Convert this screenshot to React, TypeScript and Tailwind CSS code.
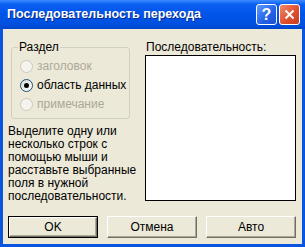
import React from "react";

const font = { fontFamily: '"Liberation Sans", Arial, sans-serif' };

const Radio: React.FC<{ label: string; checked?: boolean; disabled?: boolean }> = ({
  label,
  checked,
  disabled,
}) => (
  <div className="flex h-[19px] items-center gap-[4px] whitespace-nowrap pl-[8px]">
    <span
      className={`flex h-[13px] w-[13px] shrink-0 items-center justify-center rounded-full border ${
        disabled ? "border-[#CAC8BB] bg-[#F4F3EE]" : "border-[#1C5180] bg-[linear-gradient(135deg,#DCDBD3,#FFFFFF)]"
      }`}
    >
      {checked && <span className="h-[5px] w-[5px] rounded-full bg-black" />}
    </span>
    <span className={disabled ? "text-[#ACA899]" : "text-black"}>{label}</span>
  </div>
);

const Button: React.FC<{ label: string; isDefault?: boolean }> = ({ label, isDefault }) => (
  <div className={`h-[22px] w-[90px] ${isDefault ? "border border-black" : ""}`}>
    <div className="flex h-full w-full items-center justify-center border-t border-l border-white border-r border-b border-r-[#716F64] border-b-[#716F64] bg-[#ECE9D8] shadow-[inset_-1px_-1px_0_#ACA899]">
      {label}
    </div>
  </div>
);

const TitleButton: React.FC<{ kind: "help" | "close" }> = ({ kind }) => (
  <div
    className={`flex h-[21px] w-[21px] items-center justify-center rounded-[3px] border border-white ${
      kind === "help"
        ? "bg-[linear-gradient(135deg,#5C9BFF,#2260E8_60%,#1A4FD0)]"
        : "bg-[linear-gradient(135deg,#F08A6A,#E0502F_55%,#C63C1E)]"
    }`}
  >
    {kind === "help" ? (
      <span className="text-[16px] font-bold leading-none text-white">?</span>
    ) : (
      <svg width="11" height="11" viewBox="0 0 11 11">
        <path d="M1.5 1.5 L9.5 9.5 M9.5 1.5 L1.5 9.5" stroke="white" strokeWidth="2" />
      </svg>
    )}
  </div>
);

export default function App() {
  return (
    <div className="flex h-[247px] w-[305px] flex-col bg-[#0A55E0] text-[12px]" style={font}>
      {/* Title bar */}
      <div className="flex h-[29px] items-center bg-[linear-gradient(180deg,#3D8BFF_0%,#0A5FF2_15%,#0055E8_50%,#0050DF_85%,#0045C8_100%)] pl-[7px] pr-[5px]">
        <span className="flex-1 whitespace-nowrap text-[12.5px] font-bold text-white [text-shadow:1px_1px_0_#0A2A8C]">
          Последовательность перехода
        </span>
        <div className="flex gap-[2px]">
          <TitleButton kind="help" />
          <TitleButton kind="close" />
        </div>
      </div>

      {/* Client area */}
      <div className="mx-[3px] mb-[3px] flex flex-1 flex-col bg-[#ECE9D8] pl-[5px] pt-[12px] leading-[13px]">
        <div className="flex">
          <div className="flex w-[137px] flex-col">
            <fieldset className="ml-[3px] h-[78px] w-[119px] min-w-0 rounded-[3px] border border-[#D0D0BF] px-[6px]">
              <legend className="px-[1px]">Раздел</legend>
              <div className="-ml-[6px] pt-[3px]">
                <Radio label="заголовок" disabled />
                <Radio label="область данных" checked />
                <Radio label="примечание" disabled />
              </div>
            </fieldset>
            <p className="mt-[6px]">
              Выделите одну или несколько строк с помощью мыши и расставьте выбранные поля в нужной
              последовательности.
            </p>
          </div>
          <div className="flex flex-col">
            <span className="pl-[1px]">Последовательность:</span>
            <div className="mt-[1px] h-[146px] w-[151px] border border-black bg-white" />
          </div>
        </div>
        <div className="mt-auto mb-[6px] flex gap-[9px]">
          <Button label="OK" isDefault />
          <Button label="Отмена" />
          <Button label="Авто" />
        </div>
      </div>
    </div>
  );
}
